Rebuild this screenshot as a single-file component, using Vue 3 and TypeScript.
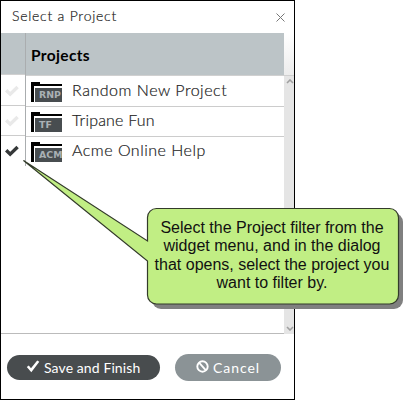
<script setup lang="ts">
interface Project {
  name: string
  tag: string
  selected: boolean
  fit: string
}

const projects: Project[] = [
  { name: 'Random New Project', tag: 'RNP', selected: false, fit: 'random' },
  { name: 'Tripane Fun', tag: 'TF', selected: false, fit: 'tripane' },
  { name: 'Acme Online Help', tag: 'ACM', selected: true, fit: 'acme' },
]

const tip: string[] = [
  'Select the Project filter from the',
  'widget menu, and in the dialog',
  'that opens, select the project you',
  'want to filter by.',
]
</script>

<template>
  <main class="stage">
    <section class="dialog">
      <header class="titlebar">
        <span class="title">Select a Project</span>
        <svg class="close" width="9" height="9" viewBox="0 0 9 9"><path d="M.5.5l8 8M8.5.5l-8 8" /></svg>
      </header>
      <div class="body">
        <div class="checks">
          <div class="check-head"></div>
          <div v-for="p in projects" :key="p.tag" class="check" :class="{ on: p.selected }">
            <svg width="14" height="12" viewBox="0 0 14 12"><path d="M1.2 5.2L5.2 9.2 12.6 2" /></svg>
          </div>
        </div>
        <div class="list">
          <div class="list-head"><span>Projects</span></div>
          <div v-for="p in projects" :key="p.tag" class="row">
            <svg class="folder" width="31" height="20" viewBox="0 0 31 20">
              <path d="M0 0h9v2h22v2H3v16H0z" fill="#000" />
              <path d="M4 6h27v14H4z" fill="#484d50" />
              <text x="8" y="16.2">{{ p.tag }}</text>
            </svg>
            <span class="name" :class="p.fit">{{ p.name }}</span>
          </div>
        </div>
        <div class="side">
          <div class="side-head"></div>
          <div class="scroll">
            <svg width="8" height="5" viewBox="0 0 8 5"><path d="M1 4l3-3 3 3" /></svg>
            <svg width="8" height="5" viewBox="0 0 8 5"><path d="M1 1l3 3 3-3" /></svg>
          </div>
        </div>
      </div>
      <footer class="actions">
        <button class="btn save">
          <svg width="14" height="13" viewBox="0 0 14 13"><path d="M.8 7L2.8 5.4 5 8.2 11.2.5 13.3 1.7 5.3 12.3z" fill="#fff" /></svg>
          <span>Save and Finish</span>
        </button>
        <button class="btn cancel">
          <svg width="13" height="13" viewBox="0 0 13 13"><circle cx="6.5" cy="6.5" r="5.2" fill="none" stroke="#fff" stroke-width="1.9" /><path d="M3.3 2.8l6.4 7.4" stroke="#fff" stroke-width="1.8" /></svg>
          <span>Cancel</span>
        </button>
      </footer>
    </section>

    <aside class="callout">
      <svg class="bubble" width="413" height="400" viewBox="0 0 413 400">
        <rect x="152" y="213" width="251" height="96" rx="9" fill="#808080" />
        <path
          d="M156.5 208.5H389.5a9 9 0 0 1 9 9V295a9 9 0 0 1-9 9H156.5a9 9 0 0 1-9-9V261L23.5 160.5 147.5 241V217.5a9 9 0 0 1 9-9z"
          fill="#c1ee84" stroke="#333b2a" stroke-width="1.2"
        />
      </svg>
      <div class="tip">
        <span v-for="line in tip" :key="line">{{ line }}</span>
      </div>
    </aside>
  </main>
</template>

<style>
body {
  margin: 0;
  background: #fff;
  overflow: hidden;
}
</style>

<style scoped>
.stage {
  position: relative;
  width: 413px;
  height: 400px;
  font-family: Lato, "Liberation Sans", sans-serif;
}
.dialog {
  box-sizing: border-box;
  width: 295px;
  height: 400px;
  border: 1px solid #000;
  display: flex;
  flex-direction: column;
  background: #fff;
}
.titlebar {
  height: 32px;
  flex: none;
  box-sizing: border-box;
  display: flex;
  justify-content: space-between;
  padding: 5px 9px 0 11px;
}
.title {
  font-size: 14px;
  font-weight: 300;
  line-height: 20px;
  letter-spacing: 0.75px;
  color: #222;
  -webkit-text-stroke: 0.2px #222;
}
.close {
  margin-top: 7px;
  fill: none;
  stroke: #777;
  stroke-width: 1;
}
.body {
  height: 301px;
  flex: none;
  display: flex;
  box-sizing: border-box;
}
.checks {
  width: 25px;
  box-sizing: border-box;
  border-right: 1px solid #aaadaf;
  height: 133px;
}
.check-head {
  height: 41px;
  background: #bcc4c7;
  border-bottom: 1px solid #d0d0d0;
}
.check {
  height: 29px;
  border-bottom: 1px solid #ccc;
  display: flex;
  align-items: flex-start;
  padding-left: 4px;
}
.check:nth-child(2) {
  height: 30px;
}
.check:last-child {
  border-bottom: 0;
}
.check svg {
  fill: none;
  stroke: #e9e9e9;
  stroke-width: 3.4;
  margin-top: 9px;
}
.check:nth-child(2) svg {
  margin-top: 10px;
}
.check.on svg {
  stroke: #353839;
}
.list {
  width: 258px;
}
.list-head {
  height: 42px;
  background: #bcc4c7;
  border-bottom: 1px solid #d0d0d0;
  display: flex;
  align-items: center;
  padding-left: 5px;
  width: 253px;
  font-size: 15.5px;
  font-weight: 700;
  color: #000;
}
.list-head span {
  padding-top: 2px;
  letter-spacing: 0.35px;
}
.row {
  height: 29px;
  border-bottom: 1px solid #ccc;
  display: flex;
  align-items: flex-start;
  padding-left: 5px;
}
.row:nth-child(2) {
  padding-top: 1px;
}
.row:last-child {
  border-bottom: 0;
}
.folder {
  margin-top: 5px;
  flex: none;
}
.folder text {
  font: bold 9.4px "DejaVu Sans", sans-serif;
  fill: #a9b0b4;
}
.name {
  margin-left: 10px;
  padding-top: 2px;
  font-size: 16px;
  font-weight: 300;
  line-height: 22px;
  color: #222;
  -webkit-text-stroke: 0.2px #222;
  white-space: nowrap;
}
.random {
  letter-spacing: 0.53px;
}
.tripane {
  letter-spacing: 0.2px;
}
.acme {
  letter-spacing: 0.5px;
}
.side {
  width: 10px;
  display: flex;
  flex-direction: column;
}
.side-head {
  height: 42px;
  border-bottom: 1px solid #d0d0d0;
  background: linear-gradient(#fff, #ececec);
}
.scroll {
  flex: 1;
  background: #e5e5e5;
  display: flex;
  flex-direction: column;
  justify-content: space-between;
  align-items: center;
  padding: 3px 0 3px 2px;
}
.scroll svg {
  fill: none;
  stroke: #a0a0a0;
  stroke-width: 1.6;
}
.actions {
  flex: 1;
  width: 283px;
  box-sizing: border-box;
  border-top: 1px solid #bbb;
  margin-top: -1px;
  padding: 20px 0 0 6px;
  display: flex;
  gap: 15px;
  align-items: flex-start;
}
.btn {
  border: 0;
  display: flex;
  align-items: center;
  flex: none;
  font-family: inherit;
  font-size: 14px;
  color: #fff;
  white-space: nowrap;
}
.save {
  width: 153px;
  height: 25px;
  margin-top: 1px;
  border-radius: 13px;
  padding: 0 0 1px 19px;
  gap: 4px;
  background: #484c4e;
  letter-spacing: 0.1px;
}
.cancel {
  width: 106px;
  height: 27px;
  border-radius: 14px;
  padding: 0 0 1px 21px;
  gap: 4px;
  background: #8b9396;
  letter-spacing: 0.95px;
}
.btn svg {
  margin-top: -2px;
}
.callout {
  position: absolute;
  inset: 0;
}
.bubble {
  position: absolute;
  left: 0;
  top: 0;
}
.tip {
  position: absolute;
  left: 148px;
  top: 219px;
  width: 248px;
  display: flex;
  flex-direction: column;
  align-items: center;
  font: 16px/18.3px "Liberation Sans", Arial, sans-serif;
  color: #111;
  white-space: nowrap;
}
</style>
